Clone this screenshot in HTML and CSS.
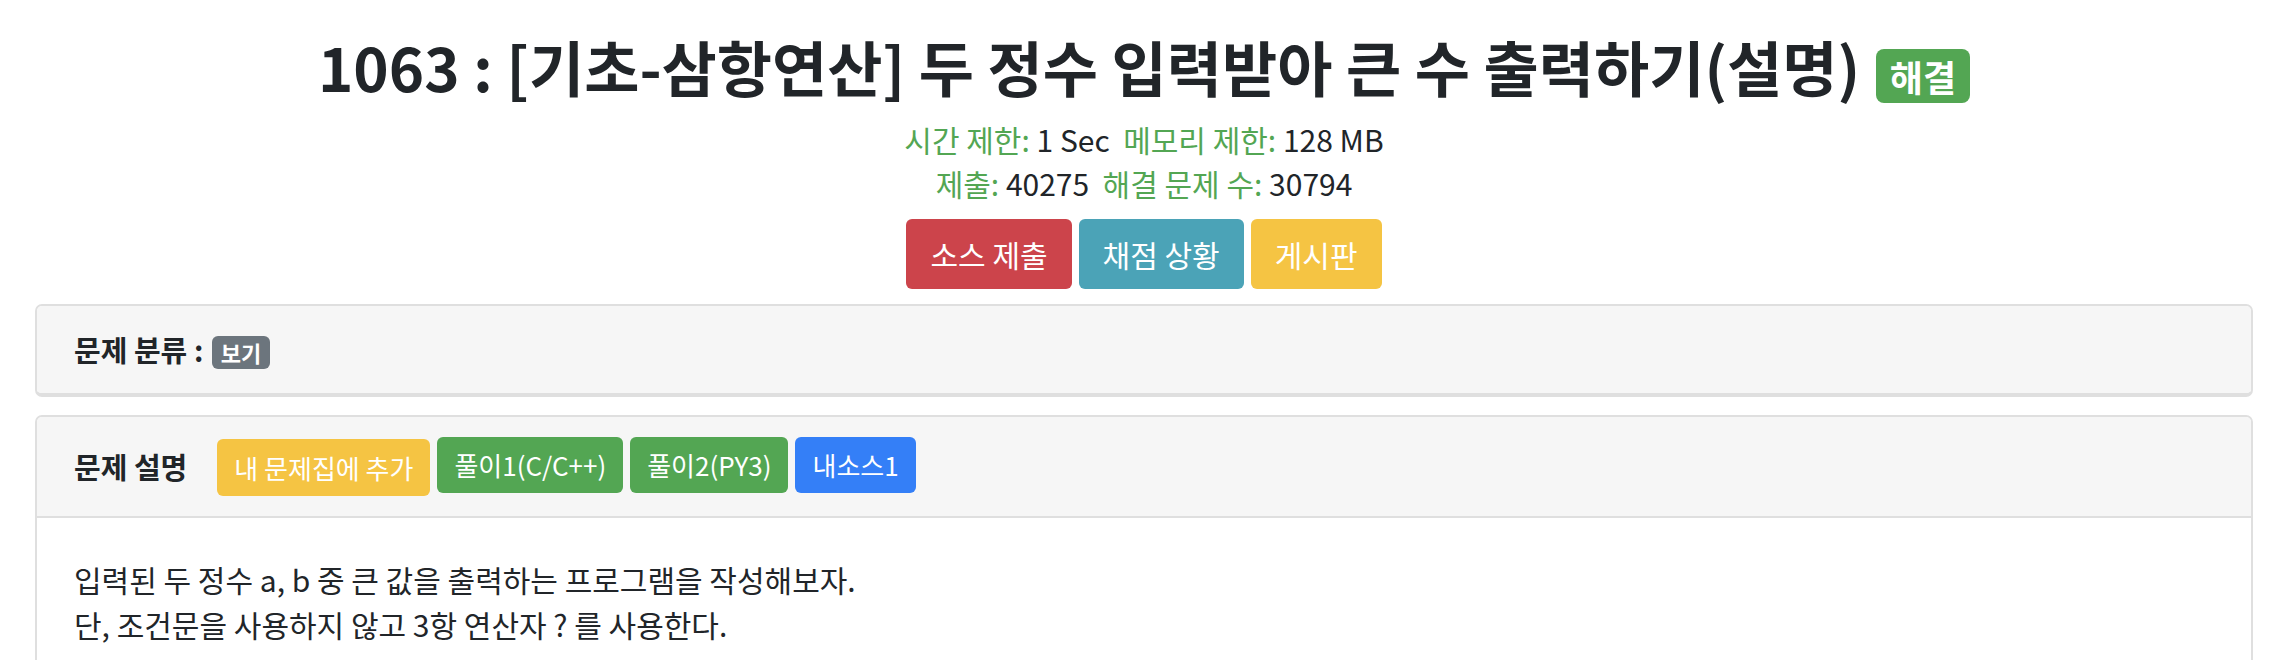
FILE: index.html
```html
<!DOCTYPE HTML>
<html>
    <head>
        <meta http-equiv="Content-Type" content="text/html; charset=UTF-8" />
        <title>1063 : [기초-삼항연산] 두 정수 입력받아 큰 수 출력하기(설명)</title>
        <link rel="stylesheet" href="styles.css">
    </head>
    <body>
        <div class="page">
            <h1 class="title">1063 : [기초-삼항연산] 두 정수 입력받아 큰 수 출력하기(설명) <span class="badge badge-solved">해결</span></h1>
            <div class="meta">
                <span class="label">시간 제한:</span> 1 Sec&nbsp; <span class="label">메모리 제한:</span> 128 MB
            </div>
            <div class="meta">
                <span class="label">제출:</span> 40275&nbsp; <span class="label">해결 문제 수:</span> 30794
            </div>
            <div class="actions">
                <a class="btn btn-lg btn-red" href="#">소스 제출</a>
                <a class="btn btn-lg btn-teal" href="#">채점 상황</a>
                <a class="btn btn-lg btn-yellow" href="#">게시판</a>
            </div>

            <div class="card card-flat">
                <div class="card-head">
                    <b>문제 분류 :</b>
                    <span class="badge badge-grey">보기</span>
                </div>
            </div>

            <div class="card">
                <div class="card-head card-split">
                    <b class="head-title">문제 설명</b>
                    <a class="btn btn-yellow btn-add" href="#">내 문제집에 추가</a>
                    <a class="btn btn-green" href="#">풀이1(C/C++)</a>
                    <a class="btn btn-green" href="#">풀이2(PY3)</a>
                    <a class="btn btn-blue" href="#">내소스1</a>
                </div>
                <div class="card-body">
                    입력된 두 정수 a, b 중 큰 값을 출력하는 프로그램을 작성해보자.<br>
                    단, 조건문을 사용하지 않고 3항 연산자 ? 를 사용한다.
                </div>
            </div>
        </div>
    </body>
</html>
```

FILE: styles.css
```css
body {
    margin: 0;
    font-family: "Noto Sans CJK KR", "Noto Sans", sans-serif;
    color: #212529;
    background: #fff;
}

.page {
    margin: 0 29px 0 35px;
    text-align: center;
}

.title {
    margin: 0 0 13px;
    padding-top: 28px;
    font-size: 60px;
    line-height: 76px;
    font-weight: 700;
}

.meta {
    font-size: 30px;
    line-height: 44px;
}

.meta .label {
    color: #53a653;
}

.actions {
    display: flex;
    justify-content: center;
    gap: 7px;
    margin-top: 14px;
}

.btn {
    display: inline-block;
    color: #fff;
    text-decoration: none;
    border-radius: 6px;
    font-size: 26px;
    line-height: 36px;
    padding: 10px 17px;
}

.btn-lg {
    font-size: 30px;
    line-height: 44px;
    padding: 13px 24px;
}

.btn-red { background: #cc444b; }
.btn-teal { background: #4ba3b7; }
.btn-yellow { background: #f5c443; }
.btn-green { background: #53a653; }
.btn-blue { background: #347ff7; }

.badge {
    display: inline-block;
    color: #fff;
    font-weight: 700;
}

.badge-solved {
    margin-left: 2px;
    background: #53a653;
    font-size: 36px;
    line-height: 48px;
    padding: 3px 14px;
    border-radius: 8px;
}

.badge-grey {
    margin-left: 2px;
    background: #6c757d;
    font-size: 22px;
    line-height: 29px;
    padding: 2px 9px;
    border-radius: 6px;
}

.card {
    margin-top: 18px;
    border: 2px solid #dfdfdf;
    border-radius: 7px;
    text-align: left;
    overflow: hidden;
}

.card-flat {
    margin-top: 15px;
    border-bottom-width: 4px;
}

.card-head {
    background: #f6f6f6;
    padding: 22px 37px;
    font-size: 29px;
    line-height: 43px;
}

.card-split {
    display: flex;
    align-items: flex-start;
    gap: 7px;
    padding: 20px 37px;
    border-bottom: 2px solid #dfdfdf;
}

.head-title {
    margin-right: 23px;
    align-self: center;
}

.btn-add {
    margin-top: 2px;
    line-height: 37px;
}

.card-body {
    padding: 39px 37px;
    font-size: 30px;
    line-height: 45px;
}
```
